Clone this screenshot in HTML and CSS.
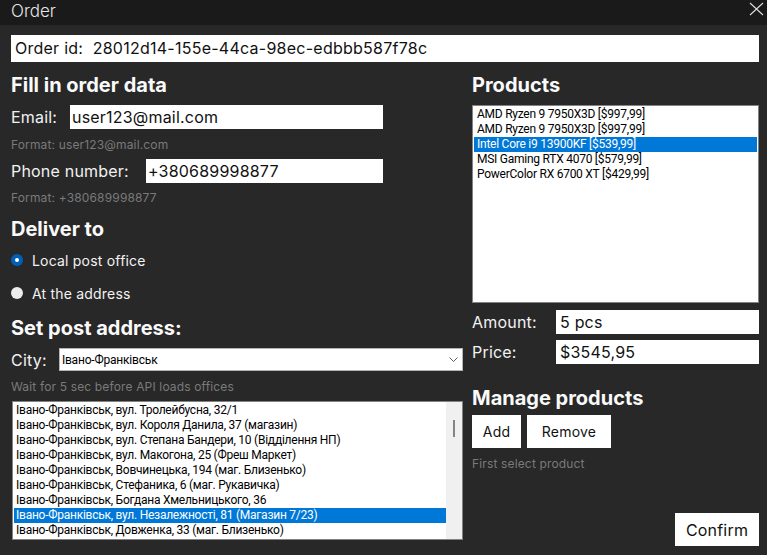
FILE: index.html
```html
<!DOCTYPE html>
<html lang="en">
<head>
<meta charset="utf-8">
<title>Order</title>
<link rel="stylesheet" href="styles.css">
</head>
<body>
<div class="titlebar">
  <span class="title">Order</span>
  <svg class="close" width="15" height="14" viewBox="0 0 15 14"><path d="M1 1L14 13M14 1L1 13" stroke="#dcdcdc" stroke-width="1.1" fill="none"/></svg>
</div>
<div class="content">
  <div class="order-id">Order id:&nbsp; 28012d14-155e-44ca-98ec-edbbb587f78c</div>
  <div class="columns">
    <div class="col-left">
      <h2 class="heading">Fill in order data</h2>
      <div class="row row-email">
        <label class="label label-email">Email:</label>
        <div class="field field-email">user123@mail.com</div>
      </div>
      <div class="hint hint-1">Format: user123@mail.com</div>
      <div class="row row-phone">
        <label class="label label-phone">Phone number:</label>
        <div class="field field-phone">+380689998877</div>
      </div>
      <div class="hint hint-2">Format: +380689998877</div>
      <h2 class="heading h-deliver">Deliver to</h2>
      <div class="radio radio-1"><span class="dot checked"></span><span>Local post office</span></div>
      <div class="radio radio-2"><span class="dot"></span><span>At the address</span></div>
      <h2 class="heading h-post">Set post address:</h2>
      <div class="row row-city">
        <label class="label label-city">City:</label>
        <div class="select">
          <span>Івано-Франківськ</span>
          <svg width="9" height="5" viewBox="0 0 9 5"><path d="M0.5 0.5L4.5 4.5L8.5 0.5" stroke="#606060" stroke-width="1" fill="none"/></svg>
        </div>
      </div>
      <div class="hint hint-3">Wait for 5 sec before API loads offices</div>
      <div class="listbox addr-list">
        <ul class="items">
          <li>Івано-Франківськ, вул. Тролейбусна, 32/1</li>
          <li>Івано-Франківськ, вул. Короля Данила, 37 (магазин)</li>
          <li>Івано-Франківськ, вул. Степана Бандери, 10 (Відділення НП)</li>
          <li>Івано-Франківськ, вул. Макогона, 25 (Фреш Маркет)</li>
          <li>Івано-Франківськ, Вовчинецька, 194 (маг. Близенько)</li>
          <li>Івано-Франківськ, Стефаника, 6 (маг. Рукавичка)</li>
          <li>Івано-Франківськ, Богдана Хмельницького, 36</li>
          <li class="selected">Івано-Франківськ, вул. Незалежності, 81 (Магазин 7/23)</li>
          <li>Івано-Франківськ, Довженка, 33 (маг. Близенько)</li>
        </ul>
        <div class="scrollbar"><div class="thumb"></div></div>
      </div>
    </div>
    <div class="col-right">
      <h2 class="heading">Products</h2>
      <div class="listbox prod-list">
        <ul class="items">
          <li>AMD Ryzen 9 7950X3D [$997,99]</li>
          <li>AMD Ryzen 9 7950X3D [$997,99]</li>
          <li class="selected">Intel Core i9 13900KF [$539,99]</li>
          <li>MSI Gaming RTX 4070 [$579,99]</li>
          <li>PowerColor RX 6700 XT [$429,99]</li>
        </ul>
      </div>
      <div class="row row-amount">
        <label class="label label-amount">Amount:</label>
        <div class="field field-amount">5 pcs</div>
      </div>
      <div class="row row-price">
        <label class="label label-amount">Price:</label>
        <div class="field field-amount">$3545,95</div>
      </div>
      <h2 class="heading h-manage">Manage products</h2>
      <div class="buttons">
        <button class="btn btn-add">Add</button>
        <button class="btn btn-remove">Remove</button>
      </div>
      <div class="hint hint-4">First select product</div>
      <button class="btn btn-confirm">Confirm</button>
    </div>
  </div>
</div>
</body>
</html>
```
FILE: styles.css
```css
* { box-sizing: border-box; }
html, body { margin: 0; padding: 0; }
body {
  width: 767px;
  height: 555px;
  overflow: hidden;
  background: #282828;
  font-family: "Inter", "Open Sans", sans-serif;
  color: #f2f2f2;
}
.titlebar {
  height: 25px;
  background: #1a1a1a;
  display: flex;
  align-items: flex-start;
  justify-content: space-between;
  padding: 0 3px 0 11px;
}
.title { font-size: 17px; line-height: 23px; color: #e6e6e6; font-weight: 300; }
.close { display: block; margin-top: 2px; }
.content { padding: 10px 8px 0 11px; }
.order-id {
  height: 27px;
  background: #fff;
  color: #111;
  font-size: 16px;
  letter-spacing: 0.25px;
  line-height: 27px;
  padding-left: 4px;
}
.columns { display: flex; gap: 9px; margin-top: 10px; }
.col-left { width: 452px; display: flex; flex-direction: column; }
.col-right { width: 287px; display: flex; flex-direction: column; }
.heading {
  margin: 0;
  height: 24px;
  line-height: 27px;
  font-size: 20px;
  font-weight: 700;
  color: #fafafa;
}
.row { display: flex; align-items: center; }
.label { font-size: 16px; color: #f2f2f2; letter-spacing: 0.2px; }
.field {
  height: 24px;
  background: #fff;
  color: #111;
  font-size: 16px;
  line-height: 24px;
  padding-left: 2px;
  letter-spacing: 0.2px;
}
.row-email { margin-top: 9px; }
.label-email { width: 59px; }
.field-email { width: 313px; }
.hint { font-size: 12px; color: #7a7a7a; height: 14px; line-height: 14px; letter-spacing: 0.15px; }
.hint-1 { margin-top: 9px; }
.row-phone { margin-top: 7px; }
.label-phone { width: 135px; }
.field-phone { width: 237px; }
.hint-2 { margin-top: 8px; }
.h-deliver { margin-top: 11px; }
.radio {
  display: flex;
  align-items: center;
  height: 18px;
  font-size: 14px;
  color: #f2f2f2;
  letter-spacing: 0.2px;
}
.radio-1 { margin-top: 11px; }
.radio-2 { margin-top: 15px; }
.dot {
  width: 12px;
  height: 12px;
  border-radius: 50%;
  background: #ececec;
  margin-right: 9px;
  position: relative;
}
.dot.checked { background: #005fb8; }
.dot.checked::after {
  content: "";
  position: absolute;
  left: 4px; top: 4px;
  width: 4px; height: 4px;
  border-radius: 50%;
  background: #fff;
}
.h-post { margin-top: 13px; }
.row-city { margin-top: 9px; height: 23px; }
.label-city { width: 48px; }
.select {
  width: 405px;
  height: 23px;
  background: #fff;
  border: 1px solid #b4b4b4;
  display: flex;
  align-items: center;
  justify-content: space-between;
  padding: 0 4px 0 2px;
  font-family: "Roboto", "Noto Sans", sans-serif;
  font-size: 12px;
  letter-spacing: -0.2px;
  color: #000;
}
.select svg { display: block; }
.hint-3 { margin-top: 9px; }
.listbox {
  background: #fff;
  border: 1px solid #828282;
  position: relative;
  font-family: "Roboto", "Noto Sans", sans-serif;
  font-size: 12px;
  letter-spacing: -0.25px;
  color: #000;
}
.items { list-style: none; margin: 0; padding: 0; }
.items li { height: 15px; line-height: 15px; padding-left: 3px; white-space: nowrap; }
.items li.selected { background: #0078d7; color: #fff; }
.addr-list {
  margin-top: 7px;
  margin-left: 1px;
  width: 451px;
  height: 139px;
  display: flex;
  padding: 0 0 0 1px;
}
.addr-list .items { flex: 1; padding-top: 1px; }
.addr-list .items li { padding-left: 2px; }
.scrollbar {
  width: 16px;
  background: #f0f0f0;
  position: relative;
}
.thumb {
  position: absolute;
  left: 7px;
  top: 18px;
  width: 2px;
  height: 17px;
  background: #858585;
}
.prod-list {
  margin-top: 9px;
  height: 198px;
  padding: 1px 1px 0 1px;
}
.row-amount { margin-top: 7px; }
.row-price { margin-top: 6px; }
.label-amount { width: 84px; }
.field-amount { width: 203px; padding-left: 4px; }
.h-manage { margin-top: 21px; }
.buttons { display: flex; gap: 6px; margin-top: 6px; }
.btn {
  background: #fff;
  border: none;
  color: #111;
  font-family: inherit;
  font-size: 14px;
  letter-spacing: 0.2px;
  height: 33px;
  padding: 0;
}
.btn-add { width: 49px; }
.btn-remove { width: 84px; }
.hint-4 { margin-top: 9px; }
.btn-confirm {
  margin-top: 42px;
  align-self: flex-end;
  width: 84px;
  font-size: 16px;
}
```
